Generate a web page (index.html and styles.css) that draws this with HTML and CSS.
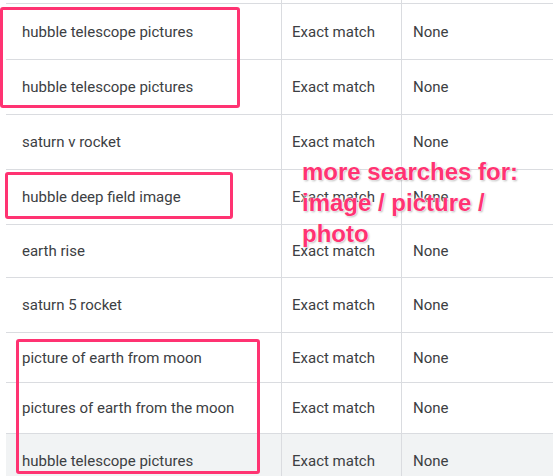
FILE: index.html
```html
<!DOCTYPE html>
<html>
<head>
<meta charset="utf-8">
<link rel="stylesheet" href="styles.css">
</head>
<body>
<div class="page">
  <div class="table">
    <div class="row r-top"><div class="c c1"></div><div class="c c2"></div><div class="c c3"></div></div>
    <div class="row h56"><div class="c c1">hubble telescope pictures</div><div class="c c2">Exact match</div><div class="c c3">None</div></div>
    <div class="row h55"><div class="c c1">hubble telescope pictures</div><div class="c c2">Exact match</div><div class="c c3">None</div></div>
    <div class="row h55"><div class="c c1">saturn v rocket</div><div class="c c2">Exact match</div><div class="c c3">None</div></div>
    <div class="row h55"><div class="c c1">hubble deep field image</div><div class="c c2">Exact match</div><div class="c c3">None</div></div>
    <div class="row h53"><div class="c c1">earth rise</div><div class="c c2">Exact match</div><div class="c c3">None</div></div>
    <div class="row h55"><div class="c c1">saturn 5 rocket</div><div class="c c2">Exact match</div><div class="c c3">None</div></div>
    <div class="row h50"><div class="c c1">picture of earth from moon</div><div class="c c2">Exact match</div><div class="c c3">None</div></div>
    <div class="row h51"><div class="c c1">pictures of earth from the moon</div><div class="c c2">Exact match</div><div class="c c3">None</div></div>
    <div class="row h55 hover"><div class="c c1">hubble telescope pictures</div><div class="c c2">Exact match</div><div class="c c3">None</div></div>
  </div>
  <div class="mark mark1"></div>
  <div class="mark mark2"></div>
  <div class="mark mark3"></div>
  <div class="note">more searches for:<br>image / picture /<br>photo</div>
</div>
</body>
</html>
```

FILE: styles.css
```css
html, body {
  margin: 0;
  padding: 0;
  background: #ffffff;
}
.page {
  position: relative;
  width: 553px;
  height: 476px;
  overflow: hidden;
}
.table {
  margin-left: 6px;
  font-family: Roboto, "Noto Sans", sans-serif;
  font-size: 15px;
  color: #3c4043;
}
.row {
  display: grid;
  grid-template-columns: 275px 120px 1fr;
  border-bottom: 1px solid #dadce0;
  box-sizing: border-box;
}
.r-top { height: 4px; }
.h56 { height: 56px; }
.h55 { height: 55px; }
.h53 { height: 53px; }
.h51 { height: 51px; }
.h50 { height: 50px; }
.hover { background: #f1f3f4; }
.c {
  display: flex;
  align-items: center;
  white-space: nowrap;
}
.c1 { padding-left: 16px; }
.c2 { border-left: 1px solid #dadce0; padding-left: 10px; }
.c3 { border-left: 1px solid #dadce0; padding-left: 11px; }
.mark {
  position: absolute;
  border: 3px solid #ff3372;
  border-radius: 3px;
  box-sizing: border-box;
}
.mark1 { left: 0; top: 7px; width: 240px; height: 101px; }
.mark2 { left: 5px; top: 172px; width: 228px; height: 47px; }
.mark3 { left: 16px; top: 339px; width: 244px; height: 135px; }
.note {
  position: absolute;
  left: 302px;
  top: 156px;
  font-family: "Liberation Sans", Arial, sans-serif;
  font-weight: bold;
  font-size: 24px;
  line-height: 31px;
  color: #ff3372;
  white-space: nowrap;
  text-shadow: 0 0 2px #ffffff, 0 0 2px #ffffff, 0 0 1px #ffffff, 1px 1px 2px rgba(0,0,0,0.35);
}
```
